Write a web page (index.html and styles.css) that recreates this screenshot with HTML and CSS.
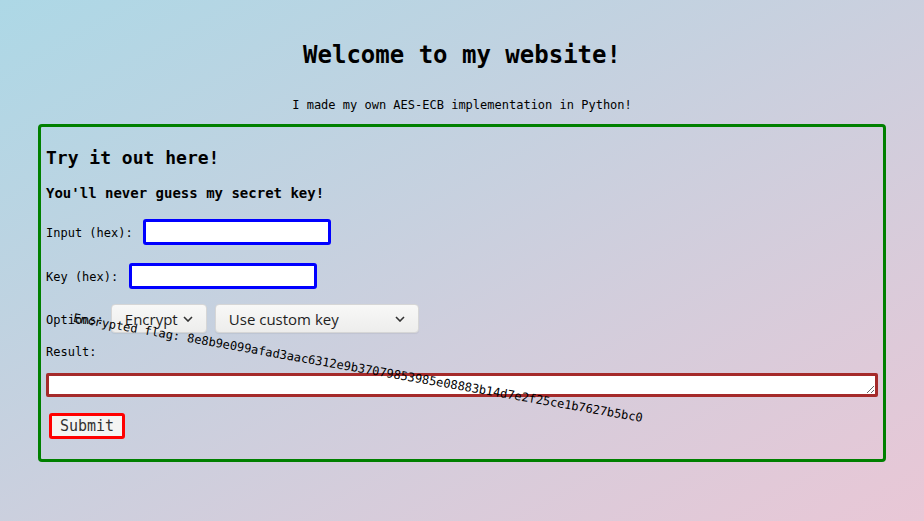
FILE: index.html
```html
<!DOCTYPE html>
<html lang="en">
<head>
<meta charset="utf-8">
<title>AES-ECB</title>
<link rel="stylesheet" href="styles.css">
</head>
<body>
<h1 class="title">Welcome to my website!</h1>
<p class="subtitle">I made my own AES-ECB implementation in Python!</p>
<div class="box">
  <h2 class="box-title">Try it out here!</h2>
  <h3 class="box-sub">You'll never guess my secret key!</h3>
  <div class="row row-input">
    <label class="lbl">Input (hex):</label>
    <input class="hex" type="text">
  </div>
  <div class="row row-key">
    <label class="lbl">Key (hex):</label>
    <input class="hex" type="text">
  </div>
  <div class="row row-opts">
    <label class="lbl">Options:</label>
    <span class="sel sel-mode">
      <select class="sel-ctl"><option>Encrypt</option><option>Decrypt</option></select>
      <svg class="chev" width="10" height="6" viewBox="0 0 10 6"><path d="M1 1 L5 5 L9 1" fill="none" stroke="#333" stroke-width="1.6"/></svg>
    </span>
    <span class="sel sel-key">
      <select class="sel-ctl"><option>Use custom key</option><option>Use secret key</option></select>
      <svg class="chev" width="10" height="6" viewBox="0 0 10 6"><path d="M1 1 L5 5 L9 1" fill="none" stroke="#333" stroke-width="1.6"/></svg>
    </span>
  </div>
  <div class="result-lbl">Result:</div>
  <textarea class="result" rows="1"></textarea>
  <button class="submit" type="button">Submit</button>
  <div class="flag">Encrypted flag: 8e8b9e099afad3aac6312e9b37079853985e08883b14d7e2f25ce1b7627b5bc0</div>
</div>
</body>
</html>
```
FILE: styles.css
```css
html {
  min-height: 100%;
  background: linear-gradient(to bottom right, #add8e6, #e9c7d6);
}
body {
  margin: 0;
  padding: 8px;
  font-family: "DejaVu Sans Mono", monospace;
  font-size: 12px;
  color: #000;
  min-height: 505px;
}
.title {
  margin: 33px 0 0;
  font-size: 24px;
  font-weight: bold;
  text-align: center;
  line-height: 28px;
}
.subtitle {
  margin: 29px 0 12px;
  text-align: center;
  line-height: 14px;
}
.box {
  position: relative;
  margin: 0 30px;
  border: 3px solid #008000;
  border-radius: 4px;
  padding: 5px 5px 5px;
}
.box-title {
  margin: 15px 0 0;
  font-size: 18px;
  line-height: 21px;
  font-weight: bold;
}
.box-sub {
  margin: 17px 0 0;
  font-size: 14px;
  line-height: 16px;
  font-weight: bold;
}
.row {
  display: flex;
  align-items: center;
}
.row-input { margin-top: 18px; gap: 10px; }
.row-key { margin-top: 18px; gap: 11px; }
.row-opts { margin-top: 15px; }
.lbl { line-height: 14px; padding-top: 2px; }
.hex {
  box-sizing: border-box;
  width: 188px;
  height: 26px;
  border: 3px solid #0000ff;
  border-radius: 3px;
  background: #fff;
  padding: 0 4px;
  outline: none;
}
.sel {
  position: relative;
  display: inline-block;
  height: 29px;
}
.sel-mode { margin-left: 7px; }
.sel-key { margin-left: 8px; }
.sel-ctl {
  appearance: none;
  -webkit-appearance: none;
  box-sizing: border-box;
  height: 29px;
  border: 1px solid #d6d6d6;
  border-radius: 4px;
  background: linear-gradient(#f8f8f7, #ededec);
  box-shadow: 0 1px 1px rgba(0,0,0,0.06);
  font-family: "Open Sans", "Noto Sans", sans-serif;
  font-size: 15px;
  color: #1e1e1e;
  padding: 0 0 0 13px;
  outline: none;
}
.sel-mode .sel-ctl { width: 96px; }
.sel-key .sel-ctl { width: 204px; }
.chev {
  position: absolute;
  top: 12px;
  right: 14px;
  pointer-events: none;
}
.result-lbl {
  margin-top: 12px;
  line-height: 14px;
}
.result {
  display: block;
  box-sizing: border-box;
  width: 100%;
  height: 24px;
  margin-top: 14px;
  border: 3px solid #a52a2a;
  border-radius: 2px;
  background: #fff;
  padding: 0;
  outline: none;
  font-family: "DejaVu Sans Mono", monospace;
}
.submit {
  display: block;
  box-sizing: border-box;
  height: 26px;
  width: 76px;
  margin: 16px 0 15px 3px;
  padding: 0;
  border: 3px solid #ff0000;
  border-radius: 3px;
  background: #f4f4f2;
  color: #333;
  font-family: "DejaVu Sans Mono", monospace;
  font-size: 15px;
}
.flag {
  position: absolute;
  left: 28px;
  top: 234px;
  width: 578px;
  line-height: 14px;
  white-space: nowrap;
  text-align: center;
  transform: rotate(10deg);
}
```
